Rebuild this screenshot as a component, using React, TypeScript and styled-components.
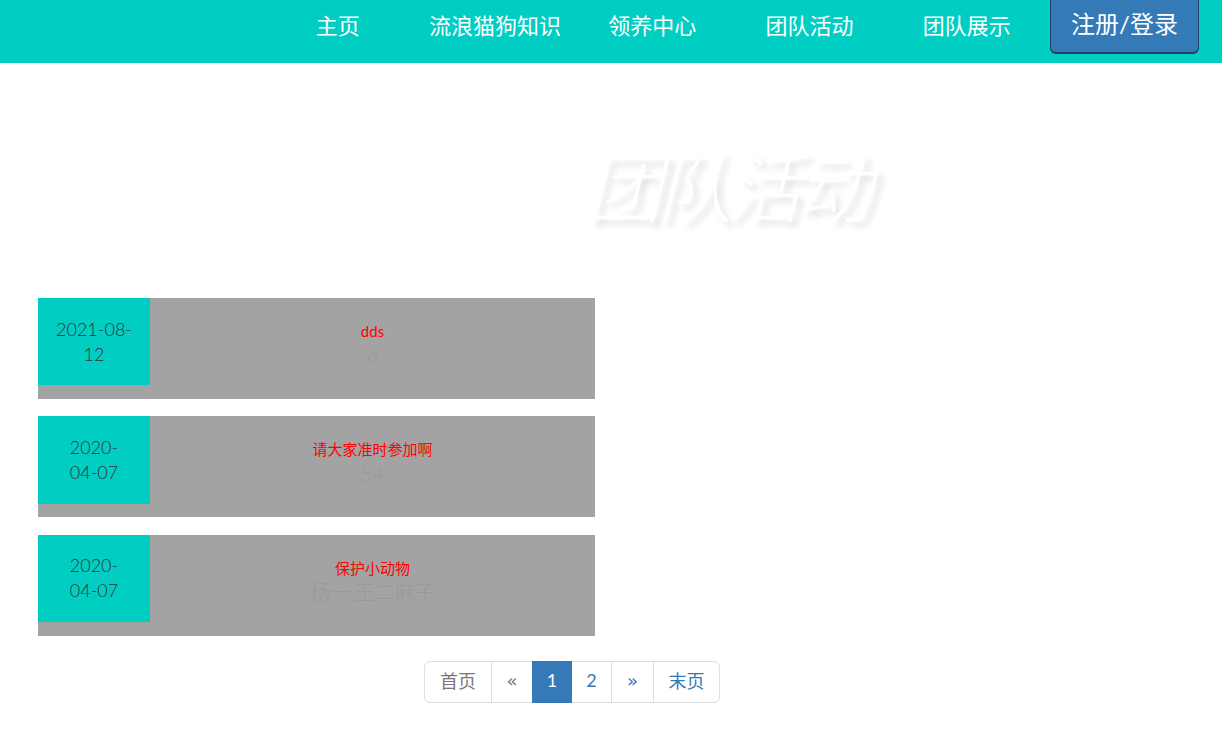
import React from 'react';
import styled, { createGlobalStyle } from 'styled-components';

const teal = '#00cec3';
const blue = '#337ab7';

const GlobalStyle = createGlobalStyle`
  * {
    box-sizing: border-box;
  }
  html,
  body {
    margin: 0;
    background: #fff;
  }
  body {
    font-family: 'Lato', 'Noto Sans CJK SC', sans-serif;
    color: #333;
  }
`;

const Header = styled.header`
  display: flex;
  height: 63px;
  padding-left: 259px;
  background: ${teal};
`;

const NavLink = styled.a`
  display: flex;
  width: 157.3px;
  height: 47px;
  align-items: center;
  justify-content: center;
  color: #fff;
  font-size: 22px;
`;

const LoginButton = styled.button`
  width: 149px;
  height: 54px;
  margin-left: 4.5px;
  padding: 0 0 8px;
  border: 2px solid #1f3f63;
  border-top: 0;
  border-left-width: 1px;
  border-right-width: 1px;
  border-radius: 0 0 6px 6px;
  background: ${blue};
  color: #fff;
  font-family: inherit;
  font-size: 24px;
`;

const Banner = styled.div`
  display: flex;
  height: 235px;
  padding: 85px 0 0 586px;
`;

const BannerTitle = styled.h1`
  margin: 0;
  color: #fff;
  font-family: 'Noto Sans CJK SC', sans-serif;
  font-size: 76px;
  font-style: italic;
  font-weight: 300;
  letter-spacing: -6px;
  line-height: 72px;
  text-shadow: 5px 5px 6px rgba(0, 0, 0, 0.13);
`;

const ActivityList = styled.div`
  display: flex;
  width: 557px;
  margin-left: 38px;
  flex-direction: column;
  gap: 17.4px;
`;

const ActivityCard = styled.article`
  display: flex;
  height: 101px;
  align-items: flex-start;
  background: #a3a3a3;
`;

const DateBox = styled.div`
  display: flex;
  width: 112px;
  height: 87.4px;
  flex-shrink: 0;
  flex-direction: column;
  align-items: center;
  justify-content: center;
  background: ${teal};
  color: #333;
  font-size: 18px;
  font-weight: 300;
  line-height: 25px;
`;

const CardBody = styled.div`
  flex: 1;
  padding-top: 22px;
  text-align: center;
`;

const CardTitle = styled.div`
  color: #f00;
  font-size: 15px;
  line-height: 22px;
`;

const CardText = styled.div`
  margin-top: 1px;
  color: #999;
  font-size: 20px;
  font-weight: 300;
  line-height: 25px;
`;

const Pagination = styled.nav`
  display: flex;
  width: 296px;
  height: 42px;
  margin: 25.2px 0 0 424px;
`;

const PageItem = styled.a<{ $width: number; $active?: boolean; $muted?: boolean; $first?: boolean; $last?: boolean }>`
  position: relative;
  z-index: ${({ $active }) => ($active ? 1 : 0)};
  display: flex;
  width: ${({ $width }) => $width}px;
  align-items: center;
  justify-content: center;
  margin-left: ${({ $first }) => ($first ? 0 : -1)}px;
  padding-bottom: 3px;
  border: 1px solid ${({ $active }) => ($active ? blue : '#ddd')};
  border-radius: ${({ $first, $last }) => ($first ? '6px 0 0 6px' : $last ? '0 6px 6px 0' : '0')};
  background: ${({ $active }) => ($active ? blue : '#fff')};
  color: ${({ $active, $muted }) => ($active ? '#fff' : $muted ? '#777' : blue)};
  font-size: 18px;
`;

const Arrow = styled.span`
  font-family: 'DejaVu Sans', sans-serif;
  font-size: 18px;
`;

const navItems = ['主页', '流浪猫狗知识', '领养中心', '团队活动', '团队展示'];

const activities = [
  { date: ['2021-08-', '12'], title: 'dds', text: 'd' },
  { date: ['2020-', '04-07'], title: '请大家准时参加啊', text: '54' },
  { date: ['2020-', '04-07'], title: '保护小动物', text: '杨一,王二麻子' },
];

export default function App() {
  return (
    <>
      <GlobalStyle />
      <Header>
        {navItems.map((item) => (
          <NavLink key={item}>{item}</NavLink>
        ))}
        <LoginButton>注册/登录</LoginButton>
      </Header>
      <Banner>
        <BannerTitle>团队活动</BannerTitle>
      </Banner>
      <ActivityList>
        {activities.map((activity) => (
          <ActivityCard key={activity.title}>
            <DateBox>
              {activity.date.map((line) => (
                <span key={line}>{line}</span>
              ))}
            </DateBox>
            <CardBody>
              <CardTitle>{activity.title}</CardTitle>
              <CardText>{activity.text}</CardText>
            </CardBody>
          </ActivityCard>
        ))}
      </ActivityList>
      <Pagination>
        <PageItem $width={68} $muted $first>首页</PageItem>
        <PageItem $width={42} $muted><Arrow>«</Arrow></PageItem>
        <PageItem $width={40} $active>1</PageItem>
        <PageItem $width={41}>2</PageItem>
        <PageItem $width={43}><Arrow>»</Arrow></PageItem>
        <PageItem $width={67} $last>末页</PageItem>
      </Pagination>
    </>
  );
}
